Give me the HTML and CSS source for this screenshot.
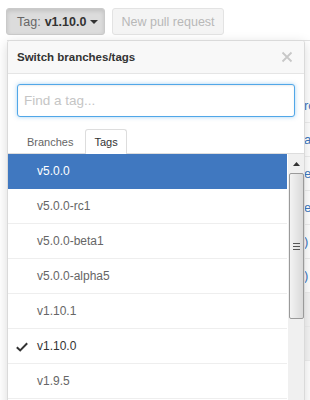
FILE: index.html
```html
<!DOCTYPE html>
<html>
<head>
<meta charset="utf-8">
<link rel="stylesheet" href="styles.css">
</head>
<body>
<div class="page">
  <div class="toolbar">
    <button class="btn btn-active">Tag: <b>v1.10.0</b> <span class="caret"></span></button>
    <button class="btn btn-disabled">New pull request</button>
  </div>
  <div class="files">
    <div class="frow"><span>ro</span></div>
    <div class="frow"><span>a</span></div>
    <div class="frow"><span>e</span></div>
    <div class="frow"><span>e</span></div>
    <div class="frow"><span>)</span></div>
    <div class="frow"><span>)</span></div>
    <div class="frow gray"></div>
    <div class="frow gray"></div>
  </div>

  <div class="menu">
    <div class="menu-title">
      <span>Switch branches/tags</span>
      <svg class="close" width="12" height="12" viewBox="0 0 12 12"><path d="M1.5 1.5 L10.5 10.5 M10.5 1.5 L1.5 10.5" stroke="#c8c8c8" stroke-width="1.8" fill="none"/></svg>
    </div>
    <div class="menu-filter">
      <input class="filter-input" type="text" placeholder="Find a tag...">
    </div>
    <div class="tabs">
      <span class="tab">Branches</span>
      <span class="tab tab-selected">Tags</span>
    </div>
    <div class="list-wrap">
      <div class="list">
        <div class="item item-nav">v5.0.0</div>
        <div class="item">v5.0.0-rc1</div>
        <div class="item">v5.0.0-beta1</div>
        <div class="item">v5.0.0-alpha5</div>
        <div class="item">v1.10.1</div>
        <div class="item item-current"><svg class="check" width="12" height="10" viewBox="0 0 12 10"><path d="M0.8 5.2 L4.2 8.4 L11.2 1.2" stroke="#333" stroke-width="2" fill="none"/></svg>v1.10.0</div>
        <div class="item">v1.9.5</div>
      </div>
      <div class="scrollbar">
        <div class="sb-arrow"><svg width="7" height="4" viewBox="0 0 7 4"><path d="M0 4 L3.5 0 L7 4 Z" fill="#333"/></svg></div>
        <div class="sb-thumb"><span class="grip"></span></div>
      </div>
    </div>
  </div>
</div>
</body>
</html>
```
FILE: styles.css
```css
html, body {
  margin: 0;
  padding: 0;
  background: #fff;
  overflow: hidden;
}
body {
  font-family: "Liberation Sans", Arial, sans-serif;
  font-size: 12px;
  color: #333;
}
.page {
  position: relative;
  width: 310px;
  height: 400px;
  overflow: hidden;
}
.toolbar {
  display: flex;
  gap: 7px;
  padding: 8px 6px 0 6px;
  height: 27px;
}
.btn {
  font-family: "Liberation Sans", Arial, sans-serif;
  font-size: 12.5px;
  height: 27px;
  padding: 0 10px;
  border-radius: 3px;
  border: 1px solid #d5d5d5;
  display: flex;
  align-items: center;
  gap: 3px;
  margin: 0;
  white-space: nowrap;
}
.btn-active {
  width: 99px;
  padding-left: 10px;
  background: #dcdcdc;
  border-color: #cacaca;
  color: #666;
  box-shadow: inset 0 2px 4px rgba(0,0,0,0.12);
}
.btn-active b {
  color: #333;
  margin-left: 1px;
}
.caret {
  display: inline-block;
  width: 0;
  height: 0;
  border-left: 4px solid transparent;
  border-right: 4px solid transparent;
  border-top: 4px solid #333;
  margin-left: 1px;
}
.btn-disabled {
  width: 112px;
  justify-content: center;
  background: #f4f4f4;
  border-color: #e3e3e3;
  color: #b8b8b8;
}
.files {
  margin: 5px 0 0 7px;
  border-top: 1px solid #e3e3e3;
  padding-top: 48px;
}
.frow {
  height: 33px;
  border-bottom: 1px solid #eee;
  display: flex;
  align-items: center;
  padding-left: 297px;
  color: #4078c0;
  font-size: 13px;
  background: #fff;
}
.frow.gray {
  background: #f5f5f5;
}
.menu {
  position: absolute;
  left: 7px;
  top: 40px;
  width: 296px;
  height: 400px;
  background: #fff;
  border: 1px solid #dadada;
  border-radius: 3px;
  box-shadow: 0 3px 12px rgba(0,0,0,0.15);
  overflow: hidden;
}
.menu-title {
  height: 32px;
  display: flex;
  align-items: center;
  justify-content: space-between;
  padding: 0 11px 0 9px;
  background: #f8f8f8;
  border-bottom: 1px solid #e5e5e5;
  font-weight: bold;
  font-size: 11.5px;
  color: #333;
}
.menu-filter {
  padding: 10px 9px 0 9px;
}
.filter-input {
  box-sizing: border-box;
  width: 278px;
  height: 33px;
  margin: 0;
  padding: 0 6px;
  border: 1px solid #51a7e8;
  border-radius: 3px;
  box-shadow: inset 0 1px 2px rgba(0,0,0,0.075), 0 0 4px rgba(81,167,232,0.5);
  font-family: "Liberation Sans", Arial, sans-serif;
  font-size: 13.5px;
  outline: none;
}
.filter-input::placeholder {
  color: #c5c5c5;
}
.tabs {
  display: flex;
  gap: 3px;
  padding: 12px 0 0 10px;
  border-bottom: 1px solid #ddd;
  height: 24px;
}
.tab {
  box-sizing: border-box;
  height: 25px;
  padding: 0 8px;
  display: flex;
  align-items: center;
  color: #666;
  font-size: 11px;
  border: 1px solid transparent;
  border-bottom: none;
  border-radius: 3px 3px 0 0;
}
.tab-selected {
  background: #fff;
  border-color: #ddd;
  color: #333;
}
.list-wrap {
  display: flex;
}
.list {
  width: 280px;
}
.item {
  height: 34px;
  border-bottom: 1px solid #eee;
  display: flex;
  align-items: center;
  padding-left: 29px;
  font-size: 12px;
  color: #666;
  position: relative;
}
.item-nav {
  background: #4078c0;
  color: #fff;
  border-bottom-color: #4078c0;
}
.item-current {
  color: #333;
}
.check {
  position: absolute;
  left: 8px;
  top: 13px;
}
.scrollbar {
  width: 16px;
  height: 260px;
  margin-left: 1px;
  background: #f0f0f0;
  display: flex;
  flex-direction: column;
  align-items: center;
}
.sb-arrow {
  height: 19px;
  width: 16px;
  display: flex;
  align-items: center;
  justify-content: center;
}
.sb-thumb {
  box-sizing: border-box;
  width: 15px;
  height: 146px;
  border: 1px solid #9a9a9a;
  border-radius: 2px;
  background: linear-gradient(to right, #f3f3f3, #d9d9d9);
  display: flex;
  align-items: center;
  justify-content: center;
}
.grip {
  display: block;
  width: 7px;
  height: 5px;
  border-top: 1px solid #555;
  border-bottom: 1px solid #555;
  position: relative;
}
.grip::after {
  content: "";
  position: absolute;
  left: 0;
  right: 0;
  top: 2px;
  border-top: 1px solid #555;
}
```
